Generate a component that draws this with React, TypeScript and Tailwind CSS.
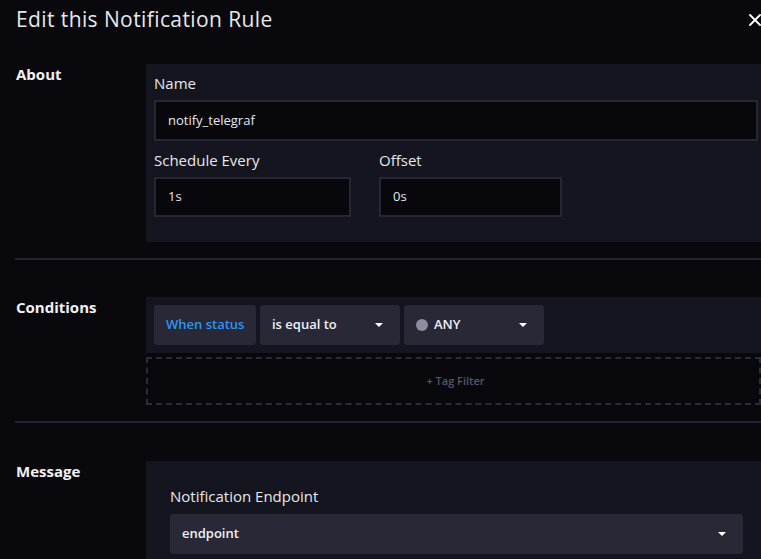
import { X } from "lucide-react";

const Caret = () => (
  <svg width="10" height="6" viewBox="0 0 10 6" className="shrink-0">
    <path d="M1 1h8L5 5z" fill="#ffffff" />
  </svg>
);

const Section = ({ label, children }: { label: string; children: React.ReactNode }) => (
  <div className="flex">
    <div className="w-[146px] shrink-0 pl-4 pt-[1px] leading-[18px] text-[15px] font-bold text-[#f1f1f3]">{label}</div>
    <div className="flex-1 min-w-0">{children}</div>
  </div>
);

const App = () => {
  return (
    <div
      className="w-[761px] h-[559px] overflow-hidden bg-[#08080d] text-[#e7e8eb]"
      style={{ fontFamily: "'Open Sans', Lato, sans-serif" }}
    >
      <div className="flex items-center justify-between h-[40px] pl-4">
        <h1 className="text-[21px] font-normal tracking-[0.4px] text-[#e7e8eb]">Edit this Notification Rule</h1>
        <X size={20} strokeWidth={2.2} className="text-white -mr-[4px]" />
      </div>

      <div className="mt-[24px]">
        <Section label="About">
          <div className="bg-[#15151f] w-[615px] h-[178px] pl-2 pt-[10px]">
            <div className="text-[15px] text-[#e7e8eb] leading-[18px]">Name</div>
            <div className="mt-[8px] w-[604px] h-[41px] border-2 border-[#262634] bg-[#07070c] flex items-center px-3 text-[13px] text-[#e7e8eb]">
              notify_telegraf
            </div>
            <div className="flex gap-[28px] mt-[10px]">
              <div>
                <div className="text-[15px] leading-[18px]">Schedule Every</div>
                <div className="mt-[8px] w-[197px] h-[40px] border-2 border-[#262634] bg-[#07070c] flex items-center px-3 text-[13px]">1s</div>
              </div>
              <div>
                <div className="text-[15px] leading-[18px]">Offset</div>
                <div className="mt-[8px] w-[183px] h-[40px] border-2 border-[#262634] bg-[#07070c] flex items-center px-3 text-[13px]">0s</div>
              </div>
            </div>
          </div>
        </Section>
      </div>

      <div className="ml-[15px] mt-[16px] h-[2px] bg-[#252532]" />

      <div className="mt-[37px]">
        <Section label="Conditions">
          <div className="bg-[#15151f] w-[615px] h-[56px] flex items-center gap-1 pl-2">
            <div className="h-[40px] w-[102px] rounded-[3px] bg-[#282836] flex items-center pl-3 text-[13px] font-semibold text-[#2d95f4]">
              When status
            </div>
            <div className="h-[40px] w-[140px] rounded-[3px] bg-[#282836] flex items-center justify-between pl-3 pr-4 text-[13px] font-semibold text-[#f1f1f3]">
              <span>is equal to</span>
              <Caret />
            </div>
            <div className="h-[40px] w-[140px] rounded-[3px] bg-[#282836] flex items-center justify-between pl-3 pr-4 text-[13px] font-semibold text-[#f1f1f3]">
              <span className="flex items-center gap-[6px]">
                <span className="w-[12px] h-[12px] rounded-full bg-[#8d8ca3]" />
                ANY
              </span>
              <Caret />
            </div>
          </div>
          <div className="mt-[4px] w-[615px] h-[48px] border-2 border-dashed border-[#2b2b3a] flex items-center justify-center text-[11px] font-semibold text-[#575769] pl-[4px]">
            + Tag Filter
          </div>
        </Section>
      </div>

      <div className="ml-[15px] mt-[16px] h-[2px] bg-[#252532]" />

      <div className="mt-[38px]">
        <Section label="Message">
          <div className="bg-[#15151f] w-[615px] h-[120px] pl-6 pt-[26px]">
            <div className="text-[15px] leading-[18px]">Notification Endpoint</div>
            <div className="mt-[9px] w-[573px] h-[40px] rounded-[3px] bg-[#282836] flex items-center justify-between pl-3 pr-4 text-[13px] font-semibold text-[#f1f1f3]">
              <span>endpoint</span>
              <Caret />
            </div>
          </div>
        </Section>
      </div>
    </div>
  );
};

export default App;
